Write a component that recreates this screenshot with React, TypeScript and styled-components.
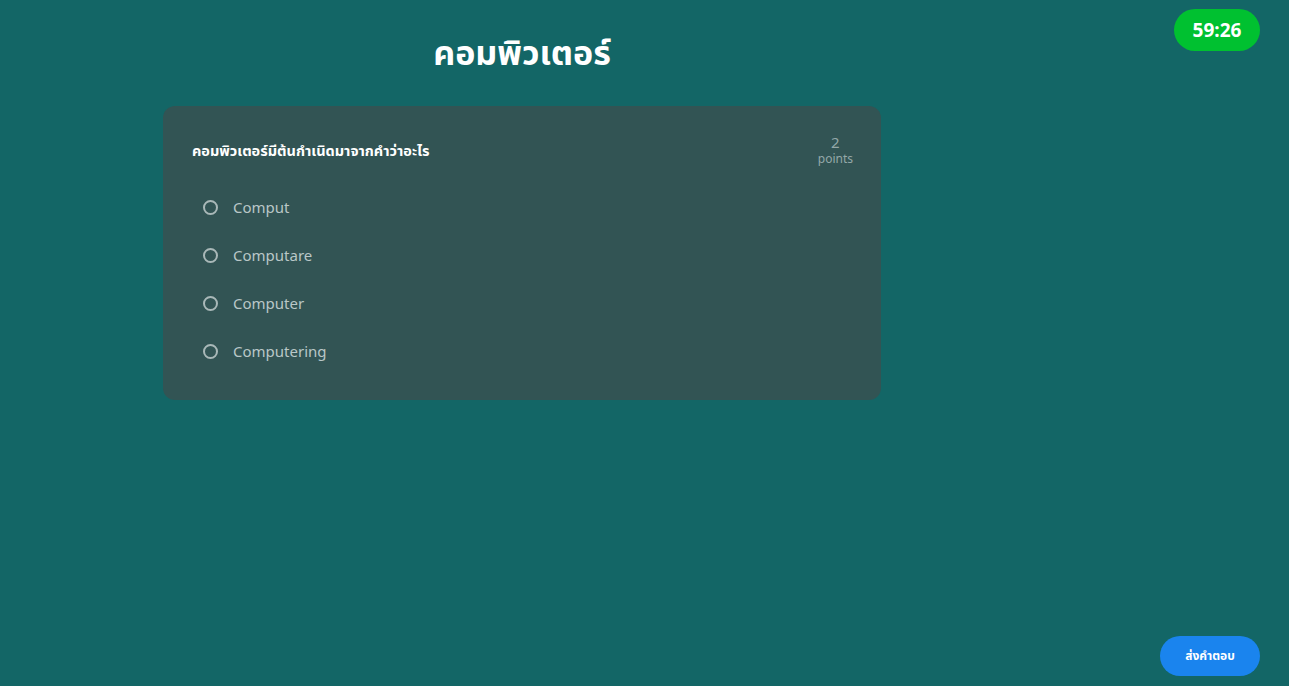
import styled, { createGlobalStyle } from 'styled-components';

const GlobalStyle = createGlobalStyle`
  html, body {
    margin: 0;
    padding: 0;
    height: 100%;
    background: #136666;
    font-family: "Noto Sans", "Noto Sans Thai", "DejaVu Sans", sans-serif;
  }
  #root { min-height: 100%; }
`

const options = ['Comput', 'Computare', 'Computer', 'Computering']

export default function App() {
  return (
    <>
      <GlobalStyle />
      <Page>
        <Main>
          <Title>คอมพิวเตอร์</Title>
          <Card>
            <CardHead>
              <Question>คอมพิวเตอร์มีต้นกำเนิดมาจากคำว่าอะไร</Question>
              <Points>
                <span className='num'>2</span>
                <span>points</span>
              </Points>
            </CardHead>
            <Options>
              {options.map((o) => (
                <Option key={o}>
                  <Radio />
                  <span>{o}</span>
                </Option>
              ))}
            </Options>
          </Card>
        </Main>
        <Timer>59:26</Timer>
        <SubmitButton>ส่งคำตอบ</SubmitButton>
      </Page>
    </>
  );
}

const Page = styled.div`
  min-height: 686px;
  position: relative;
  padding-left: 163px;
  padding-top: 26px;
  box-sizing: border-box;
`

const Main = styled.div`
  width: 718px;
  display: flex;
  flex-direction: column;
  align-items: stretch;
`

const Title = styled.h1`
  margin: 0 0 28px;
  text-align: center;
  color: #ffffff;
  font-size: 34px;
  font-weight: 700;
  line-height: 52px;
`

const Card = styled.div`
  background: #325454;
  border-radius: 12px;
  padding: 28px 28px 26px 29px;
  box-sizing: border-box;
  height: 294px;
`

const CardHead = styled.div`
  display: flex;
  justify-content: space-between;
  align-items: flex-start;
`

const Question = styled.div`
  color: #ffffff;
  font-size: 14.5px;
  font-weight: 700;
  margin-top: 4px;
  line-height: 24px;
`

const Points = styled.div`
  display: flex;
  flex-direction: column;
  align-items: center;
  color: #94a8a8;
  font-size: 12px;
  line-height: 15px;
  margin-top: -1px;

  .num{
    font-size: 15px;
    line-height: 18px;
  }
`

const Options = styled.div`
  display: flex;
  flex-direction: column;
  margin-top: 17px;
  padding-left: 11px;
`

const Option = styled.label`
  display: flex;
  align-items: center;
  gap: 15px;
  height: 48px;
  color: #b9c7c7;
  font-size: 15px;
`

const Radio = styled.span`
  width: 11px;
  height: 11px;
  border: 2px solid #a9b8b8;
  border-radius: 50%;
  display: inline-block;
`

const Timer = styled.div`
  position: absolute;
  top: 9px;
  right: 29px;
  width: 86px;
  height: 42px;
  border-radius: 21px;
  background: #00c130;
  color: #ffffff;
  font-size: 19px;
  font-weight: 700;
  display: flex;
  align-items: center;
  justify-content: center;
`

const SubmitButton = styled.button`
  position: absolute;
  right: 29px;
  bottom: 10px;
  width: 100px;
  height: 40px;
  border: none;
  border-radius: 20px;
  background: #1a84ee;
  color: #ffffff;
  font-family: inherit;
  font-size: 12px;
  font-weight: 700;
  cursor: pointer;
`
